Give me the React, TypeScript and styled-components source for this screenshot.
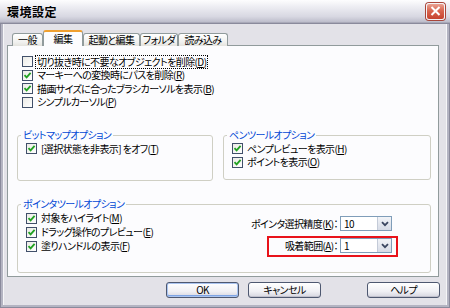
import React from "react";
import styled, { createGlobalStyle } from "styled-components";

const GlobalStyle = createGlobalStyle`
  html, body { margin: 0; padding: 0; background: #fff; }
  body {
    font-family: "Noto Sans CJK JP", "Noto Sans", sans-serif;
    font-size: 10px;
    color: #000;
    font-feature-settings: "palt";
    letter-spacing: -0.6px;
  }
  * { box-sizing: border-box; }
`;

const Window = styled.div`
  width: 450px;
  height: 308px;
  display: flex;
  flex-direction: column;
  background: #e3e2e8;
`;

const TitleBar = styled.div`
  height: 23px;
  display: flex;
  align-items: center;
  justify-content: space-between;
  padding: 0 5px 0 7px;
  background: linear-gradient(to bottom, #fdfdfe 0%, #ebebf1 35%, #d8d8e2 75%, #bdbdcb 100%);
  border-bottom: 1px solid #a9a9b8;
`;

const Title = styled.span`
  font-size: 12px;
  font-weight: bold;
  letter-spacing: 0.5px;
`;

const CloseButton = styled.div`
  width: 19px;
  height: 17px;
  border-radius: 3px;
  border: 1px solid #f4f4f6;
  box-shadow: 0 0 0 1px #a8453a;
  background: linear-gradient(to bottom, #eaa394 0%, #d9654f 45%, #c6432f 100%);
  display: flex;
  align-items: center;
  justify-content: center;
`;

const Frame = styled.div`
  flex: 1;
  display: flex;
  flex-direction: column;
  border: 3px solid #b4b4c2;
  border-top: none;
  box-shadow: inset 1px 0 0 #f6f6f8, inset -1px 0 0 #f6f6f8;
  padding: 7px 8px 0 4px;
  outline: 1px solid #8a8a9c;
  outline-offset: -1px;
`;

const TabStrip = styled.div`
  height: 16px;
  display: flex;
  align-items: flex-end;
  padding-left: 5px;
  margin-bottom: -1px;
  position: relative;
  z-index: 1;
`;

const Tab = styled.div<{ $active?: boolean; $w: number }>`
  width: ${(p) => p.$w}px;
  height: ${(p) => (p.$active ? "16px" : "13px")};
  display: flex;
  align-items: center;
  justify-content: center;
  border: 1px solid #919b9c;
  border-bottom: none;
  border-radius: 3px 3px 0 0;
  border-top: ${(p) => (p.$active ? "2px solid #f0a030" : "1px solid #919b9c")};
  background: ${(p) =>
    p.$active ? "#fcfcfe" : "linear-gradient(to bottom, #ffffff, #f0f0ee 70%, #e4e3de)"};
  position: relative;
  z-index: ${(p) => (p.$active ? 2 : 1)};
  line-height: 1;
`;

const Panel = styled.div`
  height: 232px;
  border: 1px solid #919b9c;
  background: #fcfcfe;
  padding: 9px 7px 0 9px;
  display: flex;
  flex-direction: column;
`;

const CheckList = styled.div<{ $inset?: boolean }>`
  display: flex;
  flex-direction: column;
  padding-left: ${(p) => (p.$inset ? "5px" : "0")};
`;

const Row = styled.label<{ $h?: number }>`
  height: ${(p) => p.$h ?? 14}px;
  display: flex;
  align-items: center;
  gap: 3px;
  white-space: nowrap;
`;

const Box = styled.span`
  width: 11px;
  height: 11px;
  flex: none;
  border: 1px solid #41506a;
  background: linear-gradient(135deg, #ebebe6, #ffffff);
  display: flex;
  align-items: center;
  justify-content: center;
`;

const Text = styled.span<{ $focus?: boolean }>`
  line-height: 12px;
  padding: 0 1px;
  outline: ${(p) => (p.$focus ? "1px dotted #000" : "none")};
`;

const GroupRow = styled.div`
  display: grid;
  grid-template-columns: 196px 208px;
  column-gap: 10px;
  margin-top: 21px;
`;

const Group = styled.fieldset<{ $h: number }>`
  margin: 0;
  min-width: 0;
  height: ${(p) => p.$h}px;
  border: 1px solid #cfcfc4;
  border-radius: 3px;
  padding: 0 8px;
`;

const Legend = styled.legend`
  color: #0046d5;
  line-height: 10px;
  padding: 0 2px;
  margin-left: -5px;
`;

const GroupBody = styled.div<{ $top: number }>`
  display: flex;
  margin-top: ${(p) => p.$top}px;
`;

const PointerGroup = styled(Group)`
  margin-top: 18px;
`;

const Settings = styled.div`
  margin-left: auto;
  margin-right: 24px;
  padding-top: 5px;
  display: flex;
  flex-direction: column;
  align-items: flex-end;
`;

const FieldRow = styled.div`
  display: flex;
  align-items: center;
  gap: 2px;
  margin-right: 6px;
`;

const Highlight = styled.div`
  width: 131px;
  margin-top: 5px;
  border: 2px solid #e8121a;
  padding: 0 4px 2px 0;
  display: flex;
  justify-content: flex-end;
  align-items: center;
  gap: 2px;
`;

const Combo = styled.div`
  width: 52px;
  height: 15px;
  border: 1px solid #7f9db9;
  background: #fff;
  display: flex;
  align-items: stretch;
`;

const ComboValue = styled.span`
  flex: 1;
  padding-left: 3px;
  line-height: 13px;
`;

const DropButton = styled.span`
  width: 14px;
  border-left: 1px solid #c4cbd8;
  background: linear-gradient(to bottom, #f2f4f8, #d6dbe6);
  display: flex;
  align-items: center;
  justify-content: center;
`;

const ButtonRow = styled.div`
  display: flex;
  justify-content: flex-end;
  gap: 9px;
  margin: 5px -1px 0 0;
`;

const Button = styled.div<{ $default?: boolean; $push?: boolean }>`
  width: 73px;
  height: 16px;
  border: 1px solid #4e5870;
  border-radius: 3px;
  margin-left: ${(p) => (p.$push ? "37px" : "0")};
  background: linear-gradient(to bottom, #ffffff, #f0f0f4 60%, #d6d6e0);
  box-shadow: ${(p) =>
    p.$default ? "inset 0 0 0 1px #aac4f0, inset 0 -1px 0 1px #7ea4e4" : "inset 0 -1px 0 #c0c0cc"};
  display: flex;
  align-items: center;
  justify-content: center;
  line-height: 1;
`;

const Check = () => (
  <svg width="9" height="9" viewBox="0 0 9 9">
    <path d="M1.5 4.2 L3.6 6.4 L7.6 1.8" fill="none" stroke="#21a121" strokeWidth="1.8" />
  </svg>
);

const Chevron = () => (
  <svg width="8" height="6" viewBox="0 0 8 6">
    <path d="M1 1.2 L4 4.2 L7 1.2" fill="none" stroke="#3a4660" strokeWidth="1.8" />
  </svg>
);

type Item = { label: string; key: string; checked: boolean; focus?: boolean };

const CheckItem = ({ item, h }: { item: Item; h?: number }) => (
  <Row $h={h}>
    <Box>{item.checked && <Check />}</Box>
    <Text $focus={item.focus}>
      {item.label}(<u>{item.key}</u>)
    </Text>
  </Row>
);

const editItems: Item[] = [
  { label: "切り抜き時に不要なオブジェクトを削除", key: "D", checked: false, focus: true },
  { label: "マーキーへの変換時にパスを削除", key: "R", checked: true },
  { label: "描画サイズに合ったブラシカーソルを表示", key: "B", checked: true },
  { label: "シンプルカーソル", key: "P", checked: false },
];

const penItems: Item[] = [
  { label: "ペンプレビューを表示", key: "H", checked: true },
  { label: "ポイントを表示", key: "O", checked: true },
];

const pointerItems: Item[] = [
  { label: "対象をハイライト", key: "M", checked: true },
  { label: "ドラッグ操作のプレビュー", key: "E", checked: true },
  { label: "塗りハンドルの表示", key: "F", checked: true },
];

const tabs = [
  { name: "一般", w: 31 },
  { name: "編集", w: 40 },
  { name: "起動と編集", w: 57 },
  { name: "フォルダ", w: 38 },
  { name: "読み込み", w: 50 },
];

export default function App() {
  return (
    <>
      <GlobalStyle />
      <Window>
        <TitleBar>
          <Title>環境設定</Title>
          <CloseButton>
            <svg width="11" height="10" viewBox="0 0 11 10">
              <path d="M1.5 1 L9.5 9 M9.5 1 L1.5 9" stroke="#fff" strokeWidth="2" />
            </svg>
          </CloseButton>
        </TitleBar>
        <Frame>
          <TabStrip>
            {tabs.map((t) => (
              <Tab key={t.name} $w={t.w} $active={t.name === "編集"}>
                {t.name}
              </Tab>
            ))}
          </TabStrip>
          <Panel>
            <CheckList $inset>
              {editItems.map((it) => (
                <CheckItem key={it.key} item={it} h={13.5} />
              ))}
            </CheckList>
            <GroupRow>
              <Group $h={51}>
                <Legend>ビットマップオプション</Legend>
                <GroupBody $top={2}>
                  <CheckList>
                    <Row $h={13}>
                      <Box>
                        <Check />
                      </Box>
                      <Text>
                        [選択状態を非表示] をオフ(<u>T</u>)
                      </Text>
                    </Row>
                  </CheckList>
                </GroupBody>
              </Group>
              <Group $h={50}>
                <Legend>ペンツールオプション</Legend>
                <GroupBody $top={2}>
                  <CheckList>
                    {penItems.map((it) => (
                      <CheckItem key={it.key} item={it} h={13.5} />
                    ))}
                  </CheckList>
                </GroupBody>
              </Group>
            </GroupRow>
            <PointerGroup $h={74}>
              <Legend>ポインタツールオプション</Legend>
              <GroupBody $top={2}>
                <CheckList>
                  {pointerItems.map((it) => (
                    <CheckItem key={it.key} item={it} />
                  ))}
                </CheckList>
                <Settings>
                  <FieldRow>
                    <span>
                      ポインタ選択精度(<u>K</u>)：
                    </span>
                    <Combo>
                      <ComboValue>10</ComboValue>
                      <DropButton>
                        <Chevron />
                      </DropButton>
                    </Combo>
                  </FieldRow>
                  <Highlight>
                    <span>
                      吸着範囲(<u>A</u>)：
                    </span>
                    <Combo>
                      <ComboValue>1</ComboValue>
                      <DropButton>
                        <Chevron />
                      </DropButton>
                    </Combo>
                  </Highlight>
                </Settings>
              </GroupBody>
            </PointerGroup>
          </Panel>
          <ButtonRow>
            <Button $default>OK</Button>
            <Button>キャンセル</Button>
            <Button $push>ヘルプ</Button>
          </ButtonRow>
        </Frame>
      </Window>
    </>
  );
}
